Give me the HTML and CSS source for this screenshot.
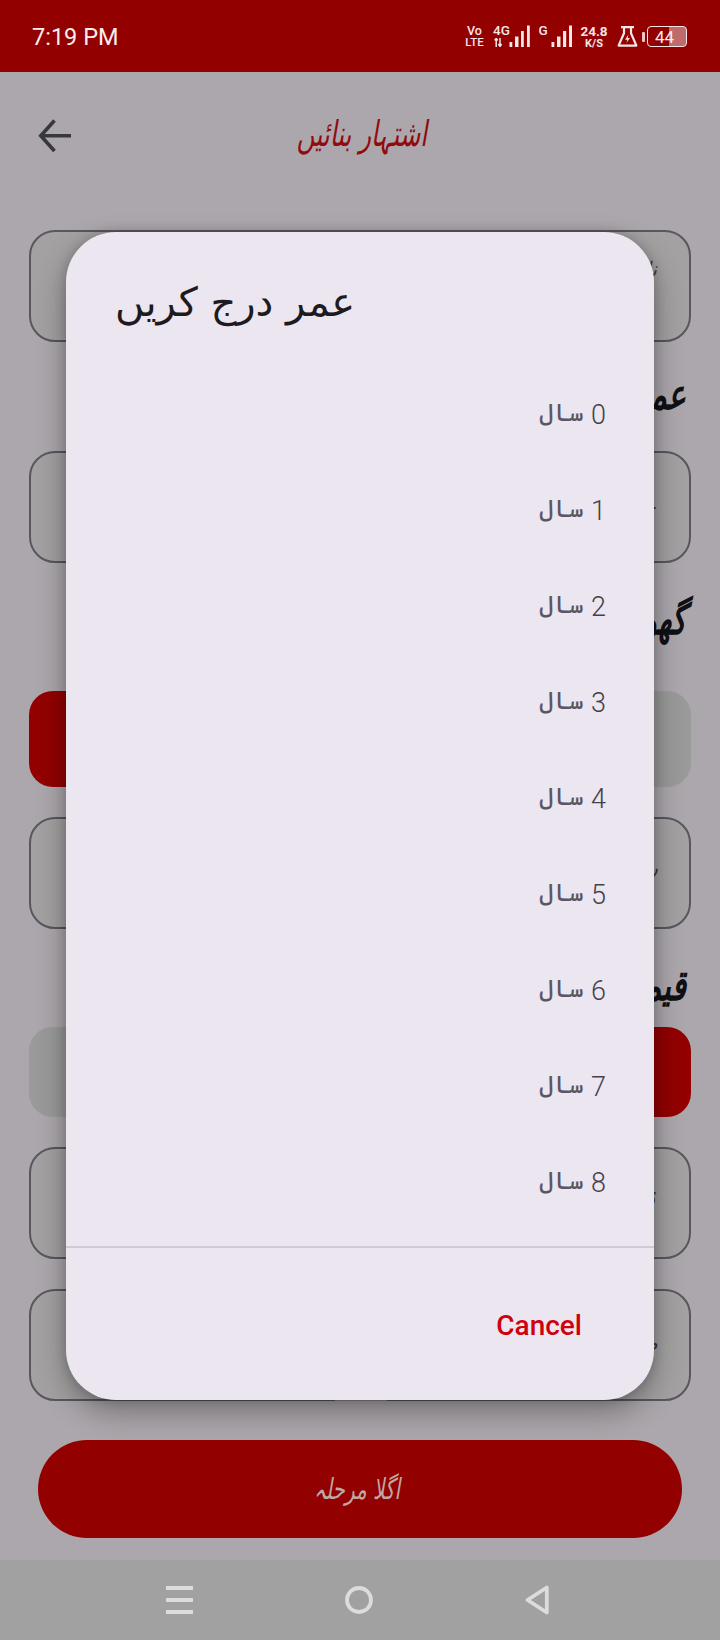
FILE: index.html
```html
<!DOCTYPE html>
<html lang="ur">
<head>
<meta charset="utf-8">
<title>اشتہار بنائیں</title>
<link rel="stylesheet" href="styles.css">
</head>
<body>
<div class="screen">
  <header class="status">
    <span class="time">7:19 PM</span>
    <div class="status-icons">
      <div class="stack volte"><span class="vo">Vo</span><span>LTE</span></div>
      <div class="stack net"><span>4G</span>
        <svg class="arrows" width="9" height="9" viewBox="0 0 9 9"><path d="M2.2 9V1M0.6 2.4 2.2 0.4 3.8 2.4M6 0V8M4.4 6 6 8.4 7.6 6" fill="none" stroke="#f6e6e6" stroke-width="1.5"/></svg>
      </div>
      <svg class="bars" width="21" height="22" viewBox="0 0 21 22"><path fill="#f6e6e6" d="M0.5 17h2.8v5H.5zM6 11.5h3.5V22H6zM12 6h2.8v16H12zM18 .5h2.8V22H18z"/></svg>
      <div class="stack net g"><span>G</span></div>
      <svg class="bars bars-second" width="21" height="22" viewBox="0 0 21 22"><path fill="#f6e6e6" d="M0.5 17h2.8v5H.5zM6 11.5h3.500V22H6zM12 6h3.200v16H12zM18 .5h3.200V22H18z"/></svg>
      <div class="stack speed"><span>24.8</span><span class="unit">K/S</span></div>
      <svg class="flask" width="21" height="21" viewBox="0 0 21 21"><path d="M4 1.200h13M7 1.200v6L1.600 19.600h17.800L14 7.200V1.200" fill="none" stroke="#f6e6e6" stroke-width="2.200" stroke-linejoin="round"/><path d="M11.500 8.500 8 13.800h2.400L9.400 17l3.600-4.900h-2.300z" fill="#f6e6e6"/></svg>
      <div class="battery-wrap">
        <span class="nub"></span>
        <div class="battery"><span class="level"></span><span class="pct">44</span></div>
      </div>
    </div>
  </header>

  <div class="topbar">
    <svg class="back" width="34" height="34" viewBox="0 0 34 34"><path d="M33 16.700H3.500M16.500 1.500 2.800 16.700 16.500 32" fill="none" stroke="#38373d" stroke-width="3.600"/></svg>
    <h1 class="title" dir="rtl">اشتہار بنائیں</h1>
  </div>

  <main class="form" dir="rtl">
    <div class="field"><span class="field-text hint-a">نام</span></div>
    <div class="label label-age"><span class="tall">عمر</span></div>
    <div class="field"><span class="field-text hint-b">ـے</span></div>
    <div class="label label-home"><span class="tall">گھوڑا</span></div>
    <div class="toggle toggle-first"><span class="opt"></span><span class="opt on"></span></div>
    <div class="field"><span class="field-text hint-c">ر</span></div>
    <div class="label label-price"><span class="tall">قیمت</span></div>
    <div class="toggle toggle-second"><span class="opt on"></span><span class="opt"></span></div>
    <div class="field"><span class="field-text hint-d">ڈ</span></div>
    <div class="field field-last"><span class="field-text hint-e">مو</span><span class="border-gap"></span></div>
    <button class="next" dir="rtl"><span class="next-text">اگلا مرحلہ</span></button>
  </main>

  <nav class="navbar">
    <svg width="27" height="28" viewBox="0 0 27 28"><path fill="#dcdcdc" d="M0 0h27v4H0zM0 12h27v4H0zM0 24h27v4H0z"/></svg>
    <svg width="28" height="28" viewBox="0 0 28 28"><circle cx="14" cy="14" r="12" fill="none" stroke="#dcdcdc" stroke-width="3.800"/></svg>
    <svg width="24" height="30" viewBox="0 0 24 30"><path d="M21.800 2.500v25L2.500 15z" fill="none" stroke="#dcdcdc" stroke-width="3.800" stroke-linejoin="round"/></svg>
  </nav>

  <section class="dialog">
    <h2 class="dialog-title" dir="rtl">عمر درج کریں</h2>
    <ul class="options" dir="rtl">
      <li><span>0</span><span class="yr">سال</span></li>
      <li><span>1</span><span class="yr">سال</span></li>
      <li><span>2</span><span class="yr">سال</span></li>
      <li><span>3</span><span class="yr">سال</span></li>
      <li><span>4</span><span class="yr">سال</span></li>
      <li><span>5</span><span class="yr">سال</span></li>
      <li><span>6</span><span class="yr">سال</span></li>
      <li><span>7</span><span class="yr">سال</span></li>
      <li><span>8</span><span class="yr">سال</span></li>
    </ul>
    <div class="actions"><button class="cancel">Cancel</button></div>
  </section>
</div>
</body>
</html>
```
FILE: styles.css
```css
* { box-sizing: border-box; }
html, body { margin: 0; padding: 0; }
body { width: 720px; height: 1640px; overflow: hidden; background: #aca7ac; font-family: Roboto, "DejaVu Sans", sans-serif; }
.screen { position: relative; width: 720px; height: 1640px; display: flex; flex-direction: column; overflow: hidden; background: #aca7ac; }

.status { height: 72px; flex: none; background: #930000; color: #f6e6e6; display: flex; align-items: flex-start; justify-content: space-between; padding: 0 33px 0 32px; }
.time { font-size: 23.500px; line-height: 28px; margin-top: 23px; color: #f8eeee; }
.status-icons { display: flex; align-items: flex-start; margin-top: 25px; }
.stack { display: flex; flex-direction: column; font-weight: 500; font-size: 12px; line-height: 11px; align-items: center; }
.volte { width: 21px; font-size: 11.500px; line-height: 10px; margin-top: 1px; gap: 1px; }
.vo { font-size: 12.500px; line-height: 10px; }
.net { width: 17px; margin-left: 8px; font-size: 13.500px; }
.net.g { width: 10px; margin-left: 8px; margin-top: 0; }
.arrows { margin-top: 2px; margin-left: -6px; }
.bars { margin-left: 0; margin-top: 0; }
.net + .bars { margin-left: -1px; }
.net.g + .bars-second { margin-left: 3px; }
.speed { width: 28px; margin-left: 8px; font-size: 13.500px; line-height: 13px; font-weight: 700; }
.unit { font-size: 11px; line-height: 9px; margin-top: 1px; }
.flask { margin-left: 9px; margin-top: 1px; }
.battery-wrap { display: flex; align-items: center; margin-left: 4px; margin-top: 1px; }
.nub { width: 3px; height: 10px; background: #e6c8c8; border-radius: 1px; margin-right: 2px; }
.battery { position: relative; width: 40px; height: 21px; border: 1.500px solid #f6e6e6; border-radius: 4px; display: flex; align-items: center; justify-content: center; }
.level { position: absolute; right: 0; top: 0; bottom: 0; width: 17px; background: rgba(255, 255, 255, .42); border-radius: 0 2px 2px 0; }
.pct { position: relative; font-size: 17px; line-height: 18px; margin-right: 5px; color: #f8eeee; }

.topbar { height: 126px; flex: none; position: relative; display: flex; align-items: center; justify-content: center; }
.back { position: absolute; left: 38px; top: 47px; }
.title { margin: 0 0 2px 4px; font-family: "DejaVu Sans", sans-serif; font-weight: 400; font-style: italic; font-size: 24.500px; line-height: 50px; color: #920a0e; transform: scaleY(1.45); }

.form { flex: 1; padding: 32px 29px 0; display: flex; flex-direction: column; font-family: "DejaVu Sans", sans-serif; }
.field { position: relative; height: 112px; flex: none; background: #a3a1a2; border: 2px solid #59575d; border-radius: 26px; display: flex; align-items: center; padding: 0 26px; color: #3a383c; font-size: 20px; font-style: italic; }
.field-text { display: block; }
.hint-a { margin-top: -34px; margin-right: 6px; }
.hint-b { margin-top: -10px; margin-right: 8px; }
.hint-c { margin-top: -12px; margin-right: 5px; }
.hint-d { margin-top: -10px; margin-right: 8px; }
.hint-e { margin-top: -6px; margin-right: 5px; }
.field-last { margin-top: 30px; }
.border-gap { position: absolute; left: 304px; width: 52px; height: 3px; bottom: -2px; background: #8b878b; }

.label { flex: none; color: #111014; font-weight: 700; font-style: italic; padding-right: 5px; font-size: 30px; }
.tall { display: inline-block; transform: scaleY(1.4); }
.label-age { height: 109px; line-height: 50px; padding-top: 28px; }
.label-home { height: 128px; line-height: 50px; padding-top: 32px; }
.label-price { height: 98px; line-height: 50px; padding-top: 32px; }

.toggle { flex: none; display: grid; grid-template-columns: 1fr 1fr; margin-bottom: 30px; border-radius: 24px; overflow: hidden; }
.toggle-first { height: 96px; }
.toggle-second { height: 90px; }
.opt { background: #9a9a9a; }
.opt.on { background: #930000; }

.next { margin: 39px 9px 0; height: 98px; flex: none; border: 0; border-radius: 49px; background: #930000; color: #c0a6a6; font-family: "DejaVu Sans", sans-serif; font-style: italic; font-size: 20px; padding: 0; }
.next-text { display: inline-block; transform: scaleY(1.45); margin-right: 6px; }

.navbar { height: 80px; flex: none; background: #a1a1a1; display: flex; align-items: center; justify-content: center; gap: 152px; padding-right: 5px; }

.dialog { position: absolute; left: 66px; top: 232px; width: 588px; height: 1168px; background: #ece6f0; border-radius: 50px; box-shadow: 0 12px 30px rgba(0, 0, 0, .32), 0 0 12px rgba(0, 0, 0, .18); display: flex; flex-direction: column; }
.dialog-title { margin: 0; height: 133px; padding: 40px 0 0 49px; flex: none; font-family: "DejaVu Sans", sans-serif; font-weight: 400; font-size: 40px; line-height: 60px; color: #1d1b20; align-self: flex-start; }
.options { list-style: none; margin: 0; padding: 0 48px 0 0; flex: none; height: 881px; font-family: Roboto, "DejaVu Sans", sans-serif; font-weight: 300; font-size: 27px; color: #45414b; }
.options li { height: 96px; display: flex; align-items: center; padding-top: 3px; gap: 7px; }
.yr { font-family: "DejaVu Sans", sans-serif; font-size: 25px; line-height: 30px; color: #5b5761; margin-top: -4px; }
.actions { flex: 1; border-top: 2px solid #cfcad4; display: flex; justify-content: flex-end; align-items: flex-start; padding: 62px 72px 0 0; }
.cancel { border: 0; background: none; padding: 0; font-family: Roboto, sans-serif; font-weight: 500; font-size: 28px; line-height: 32px; color: #d0000c; }
```
